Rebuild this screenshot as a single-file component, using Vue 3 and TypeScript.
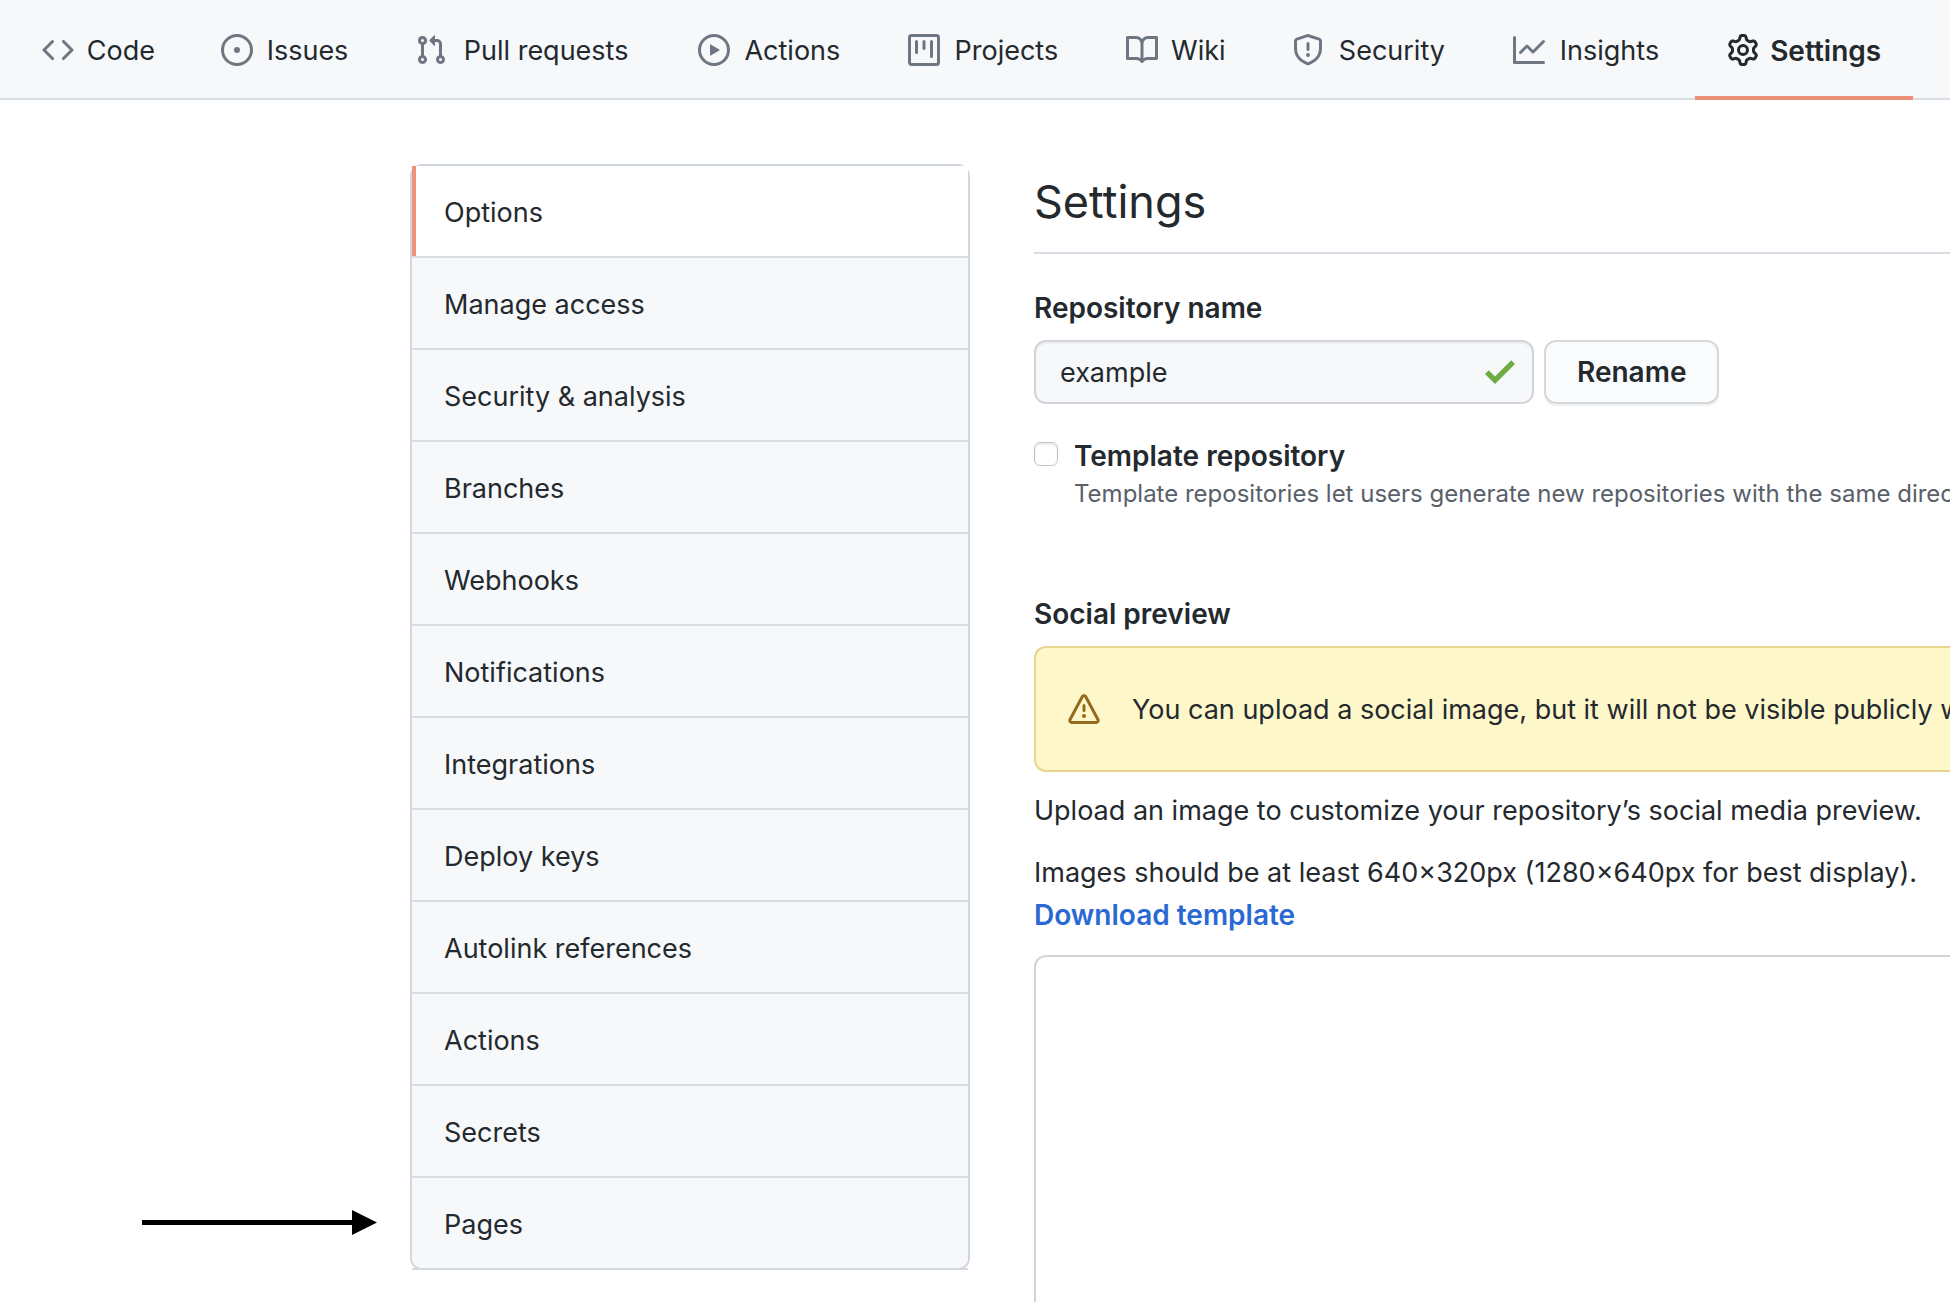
<script setup lang="ts">
import { ref } from 'vue'

interface Tab {
  label: string
  icon: string
  current?: boolean
}

const tabs: Tab[] = [
  {
    label: 'Code',
    icon: 'M4.72 3.22a.75.75 0 011.06 1.06L2.06 8l3.72 3.72a.75.75 0 11-1.06 1.06L.47 8.53a.75.75 0 010-1.06l4.25-4.25zm6.56 0a.75.75 0 10-1.06 1.06L13.94 8l-3.72 3.72a.75.75 0 101.06 1.06l4.25-4.25a.75.75 0 000-1.06l-4.25-4.25z',
  },
  {
    label: 'Issues',
    icon: 'M8 9.5a1.5 1.5 0 100-3 1.5 1.5 0 000 3zM8 0a8 8 0 100 16A8 8 0 008 0zM1.5 8a6.5 6.5 0 1113 0 6.5 6.5 0 01-13 0z',
  },
  {
    label: 'Pull requests',
    icon: 'M7.177 3.073L9.573.677A.25.25 0 0110 .854v4.792a.25.25 0 01-.427.177L7.177 3.427a.25.25 0 010-.354zM3.75 2.5a.75.75 0 100 1.5.75.75 0 000-1.5zm-2.25.75a2.25 2.25 0 113 2.122v5.256a2.251 2.251 0 11-1.5 0V5.372A2.25 2.25 0 011.5 3.25zM11 2.5h-1V4h1a1 1 0 011 1v5.628a2.251 2.251 0 101.5 0V5A2.5 2.5 0 0011 2.5zm1 10.25a.75.75 0 111.5 0 .75.75 0 01-1.5 0zM3.75 12a.75.75 0 100 1.5.75.75 0 000-1.5z',
  },
  {
    label: 'Actions',
    icon: 'M1.5 8a6.5 6.5 0 1113 0 6.5 6.5 0 01-13 0zM8 0a8 8 0 100 16A8 8 0 008 0zM6.379 5.227A.25.25 0 006 5.442v5.117a.25.25 0 00.379.214l4.264-2.559a.25.25 0 000-.428L6.379 5.227z',
  },
  {
    label: 'Projects',
    icon: 'M1.75 0A1.75 1.75 0 000 1.75v12.5C0 15.216.784 16 1.75 16h12.5A1.75 1.75 0 0016 14.25V1.75A1.75 1.75 0 0014.25 0H1.75zM1.5 1.75a.25.25 0 01.25-.25h12.5a.25.25 0 01.25.25v12.5a.25.25 0 01-.25.25H1.75a.25.25 0 01-.25-.25V1.75zM11.75 3a.75.75 0 00-.75.75v7.5a.75.75 0 001.5 0v-7.5a.75.75 0 00-.75-.75zm-8.25.75a.75.75 0 011.5 0v5.5a.75.75 0 01-1.5 0v-5.5zM8 3a.75.75 0 00-.75.75v3.5a.75.75 0 001.5 0v-3.5A.75.75 0 008 3z',
  },
  {
    label: 'Wiki',
    icon: 'M0 1.75A.75.75 0 01.75 1h4.253c1.227 0 2.317.59 3 1.501A3.744 3.744 0 0111.006 1h4.245a.75.75 0 01.75.75v10.5a.75.75 0 01-.75.75h-4.507a2.25 2.25 0 00-1.591.659l-.622.621a.75.75 0 01-1.06 0l-.622-.621A2.25 2.25 0 005.258 13H.75a.75.75 0 01-.75-.75V1.75zm8.755 3a2.25 2.25 0 012.25-2.25H14.5v9h-3.757c-.71 0-1.4.201-1.992.572l.004-7.322zm-1.504 7.324l.004-5.073-.002-2.253A2.25 2.25 0 005.003 2.5H1.5v9h3.757a3.75 3.75 0 011.994.574z',
  },
  {
    label: 'Security',
    icon: 'M7.467.133a1.75 1.75 0 011.066 0l5.25 1.68A1.75 1.75 0 0115 3.48V7c0 1.566-.32 3.182-1.303 4.682-.983 1.498-2.585 2.813-5.032 3.855a1.7 1.7 0 01-1.33 0c-2.447-1.042-4.049-2.357-5.032-3.855C1.32 10.182 1 8.566 1 7V3.48a1.75 1.75 0 011.217-1.667l5.25-1.68zm.61 1.429a.25.25 0 00-.153 0l-5.25 1.68a.25.25 0 00-.174.238V7c0 1.358.275 2.666 1.057 3.86.784 1.194 2.121 2.34 4.366 3.297a.2.2 0 00.154 0c2.245-.956 3.582-2.104 4.366-3.298C13.225 9.666 13.5 8.36 13.5 7V3.48a.25.25 0 00-.174-.237l-5.25-1.68zM9 10.5a1 1 0 11-2 0 1 1 0 012 0zm-.25-5.75a.75.75 0 10-1.5 0v3a.75.75 0 001.5 0v-3z',
  },
  {
    label: 'Insights',
    icon: 'M1.5 1.75a.75.75 0 00-1.5 0v12.5c0 .414.336.75.75.75h14.5a.75.75 0 000-1.5H1.5V1.75zm14.28 2.53a.75.75 0 00-1.06-1.06L10 7.94 7.53 5.47a.75.75 0 00-1.06 0L3.22 8.72a.75.75 0 001.06 1.06L7 7.06l2.47 2.47a.75.75 0 001.06 0l5.25-5.25z',
  },
  {
    label: 'Settings',
    current: true,
    icon: 'M7.429 1.525a6.593 6.593 0 011.142 0c.036.003.108.036.137.146l.289 1.105c.147.56.55.967.997 1.189.174.086.341.183.501.29.417.278.97.423 1.53.27l1.102-.303c.11-.03.175.016.195.046.219.31.41.641.573.989.014.031.022.11-.059.19l-.815.806c-.411.406-.562.957-.53 1.456a4.588 4.588 0 010 .582c-.032.499.119 1.05.53 1.456l.815.806c.08.08.073.159.059.19a6.494 6.494 0 01-.573.99c-.02.029-.086.074-.195.045l-1.103-.303c-.559-.153-1.112-.008-1.529.27-.16.107-.327.204-.5.29-.449.222-.851.628-.998 1.189l-.289 1.105c-.029.11-.101.143-.137.146a6.613 6.613 0 01-1.142 0c-.036-.003-.108-.037-.137-.146l-.289-1.105c-.147-.56-.55-.967-.997-1.189a4.502 4.502 0 01-.501-.29c-.417-.278-.97-.423-1.53-.27l-1.102.303c-.11.03-.175-.016-.195-.046a6.492 6.492 0 01-.573-.989c-.014-.031-.022-.11.059-.19l.815-.806c.411-.406.562-.957.53-1.456a4.587 4.587 0 010-.582c.032-.499-.119-1.05-.53-1.456l-.815-.806c-.08-.08-.073-.159-.059-.19a6.44 6.44 0 01.573-.99c.02-.029.086-.075.195-.045l1.103.303c.559.153 1.112.008 1.529-.27.16-.107.327-.204.5-.29.449-.222.851-.628.998-1.189l.289-1.105c.029-.11.101-.143.137-.146zM8 0c-.236 0-.47.01-.701.03-.743.065-1.29.615-1.458 1.261l-.29 1.106c-.017.066-.078.158-.211.224a5.994 5.994 0 00-.668.386c-.123.082-.233.09-.3.071L3.27 2.776c-.644-.177-1.392.02-1.82.63a7.977 7.977 0 00-.704 1.217c-.315.675-.111 1.422.363 1.891l.815.806c.05.048.098.147.088.294a6.084 6.084 0 000 .772c.01.147-.038.246-.088.294l-.815.806c-.474.469-.678 1.216-.363 1.891.2.428.436.835.704 1.218.428.609 1.176.806 1.82.63l1.103-.303c.066-.019.176-.011.299.071.213.143.436.272.668.386.133.066.194.158.212.224l.289 1.106c.169.646.715 1.196 1.458 1.26a8.094 8.094 0 001.402 0c.743-.064 1.29-.614 1.458-1.26l.29-1.106c.017-.066.078-.158.211-.224a5.98 5.98 0 00.668-.386c.123-.082.233-.09.3-.071l1.102.302c.644.177 1.392-.02 1.82-.63.268-.382.505-.789.704-1.217.315-.675.111-1.422-.364-1.891l-.814-.806c-.05-.048-.098-.147-.088-.294a6.1 6.1 0 000-.772c-.01-.147.039-.246.088-.294l.814-.806c.475-.469.679-1.216.364-1.891a7.992 7.992 0 00-.704-1.218c-.428-.609-1.176-.806-1.82-.63l-1.103.303c-.066.019-.176.011-.299-.071a5.991 5.991 0 00-.668-.386c-.133-.066-.194-.158-.212-.224L10.16 1.29C9.99.645 9.444.095 8.701.031A8.094 8.094 0 008 0zm1.5 8a1.5 1.5 0 11-3 0 1.5 1.5 0 013 0zM11 8a3 3 0 11-6 0 3 3 0 016 0z',
  },
]

const menu: string[] = [
  'Options',
  'Manage access',
  'Security & analysis',
  'Branches',
  'Webhooks',
  'Notifications',
  'Integrations',
  'Deploy keys',
  'Autolink references',
  'Actions',
  'Secrets',
  'Pages',
]

const currentMenu = 'Options'
const repositoryName = ref('example')
const isTemplate = ref(false)
</script>

<template>
  <div class="page">
    <nav class="tabs" aria-label="Repository">
      <a
        v-for="tab in tabs"
        :key="tab.label"
        href="#"
        class="tab"
        :class="{ 'tab-current': tab.current }"
        :aria-current="tab.current ? 'page' : undefined"
      >
        <svg class="tab-icon" viewBox="0 0 16 16" aria-hidden="true">
          <path fill-rule="evenodd" :d="tab.icon" />
        </svg>
        <span class="tab-label" :data-content="tab.label">{{ tab.label }}</span>
      </a>
    </nav>

    <div class="content">
      <div class="side">
        <svg class="arrow" viewBox="0 0 235 26" aria-hidden="true">
          <path d="M0 10h210V0l25 12.5L210 25V15H0z" />
        </svg>
        <nav class="menu" aria-label="Settings">
          <a
            v-for="item in menu"
            :key="item"
            href="#"
            class="menu-item"
            :class="{ 'menu-current': item === currentMenu }"
            >{{ item }}</a
          >
        </nav>
      </div>

      <main class="main">
        <h1 class="title">Settings</h1>

        <form class="rename" @submit.prevent>
          <label class="field-label" for="repo-name">Repository name</label>
          <div class="rename-row">
            <div class="name-field">
              <input id="repo-name" v-model="repositoryName" class="name-input" type="text" />
              <svg class="name-check" viewBox="0 3.5 12 9.5" aria-hidden="true">
                <path d="M12 5l-8 8-4-4 1.5-1.5L4 10l6.5-6.5L12 5z" />
              </svg>
            </div>
            <button class="button" type="submit">Rename</button>
          </div>
        </form>

        <div class="template">
          <input id="template" v-model="isTemplate" class="checkbox" type="checkbox" />
          <div class="template-text">
            <label class="field-label" for="template">Template repository</label>
            <p class="note">
              Template repositories let users generate new repositories with the same directory structure and files.
            </p>
          </div>
        </div>

        <section class="social">
          <h2 class="field-label">Social preview</h2>
          <div class="flash">
            <svg class="flash-icon" viewBox="0 0 16 16" aria-hidden="true">
              <path
                fill-rule="evenodd"
                d="M8.22 1.754a.25.25 0 00-.44 0L1.698 13.132a.25.25 0 00.22.368h12.164a.25.25 0 00.22-.368L8.22 1.754zm-1.763-.707c.659-1.234 2.427-1.234 3.086 0l6.082 11.378A1.75 1.75 0 0114.082 15H1.918a1.75 1.75 0 01-1.543-2.575L6.457 1.047zM9 11a1 1 0 11-2 0 1 1 0 012 0zm-.25-5.25a.75.75 0 00-1.5 0v2.5a.75.75 0 001.5 0v-2.5z"
              />
            </svg>
            <span>You can upload a social image, but it will not be visible publicly while this repository is private.</span>
          </div>
          <p class="text">Upload an image to customize your repository’s social media preview.</p>
          <p class="text">
            Images should be at least 640×320px (1280×640px for best display).<br />
            <a class="link" href="#">Download template</a>
          </p>
          <div class="preview"></div>
        </section>
      </main>
    </div>
  </div>
</template>

<style>
body {
  margin: 0;
  overflow: hidden;
}
</style>

<style scoped>
.page {
  height: 100vh;
  display: flex;
  flex-direction: column;
  overflow: hidden;
  background: #fff;
  color: #24292e;
  font-family: Inter, 'Liberation Sans', sans-serif;
  font-size: 27px;
  line-height: 42px;
  white-space: nowrap;
}

h1,
h2,
p {
  margin: 0;
}

a {
  color: inherit;
  text-decoration: none;
}

.tabs {
  flex: none;
  display: flex;
  height: 100px;
  padding-left: 10px;
  background: #f6f8fa;
  box-shadow: inset 0 -2px #d8dee4;
}

.tab {
  display: flex;
  align-items: center;
  gap: 11px;
  padding: 0 32px;
}

.tab-icon {
  flex: none;
  width: 32px;
  height: 32px;
  fill: #6e7781;
}

.tab-label {
  padding-top: 2px;
  text-align: center;
}

/* Reserves the width of the bold label, so tabs keep their size when selected */
.tab-label::after {
  content: attr(data-content);
  display: block;
  height: 0;
  overflow: hidden;
  visibility: hidden;
  font-size: 28px;
  font-weight: 600;
}

.tab-current {
  font-size: 28px;
  font-weight: 600;
  box-shadow: inset 0 -4px #ec8e78;
}

.tab-current .tab-icon {
  fill: #24292e;
}

.content {
  flex: 1;
  min-height: 0;
  display: flex;
  align-items: stretch;
  gap: 64px;
  padding-top: 64px;
}

.side {
  flex: none;
  align-self: flex-start;
  display: flex;
  align-items: flex-end;
  gap: 33px;
  padding-left: 142px;
}

.arrow {
  width: 235px;
  height: 26px;
  margin-bottom: 34px;
}

.menu {
  position: relative;
  box-sizing: border-box;
  width: 560px;
  border: 2px solid #d0d7de;
  border-radius: 12px;
}

/* Square-ended rule along the lower edge of the menu */
.menu::after {
  content: '';
  position: absolute;
  left: 0;
  right: 0;
  bottom: -2px;
  height: 2px;
  background: #d3d9df;
}

.menu-item {
  display: block;
  padding: 26px 32px 22px;
  background: #f6f8fa;
  border-bottom: 2px solid #d8dee4;
}

.menu-item:last-child {
  border-bottom: 0;
  border-radius: 0 0 10px 10px;
}

.menu-current {
  background: #fff;
  box-shadow: inset 4px 0 #f0917b;
}

.main {
  flex: 1;
  min-width: 0;
  display: flex;
  flex-direction: column;
}

.title {
  padding: 3px 0 15px;
  border-bottom: 2px solid #d8dee4;
  font-size: 45px;
  font-weight: 400;
  line-height: 70px;
}

.field-label {
  display: block;
  font-size: 28px;
  font-weight: 600;
  line-height: 42px;
}

.rename {
  display: flex;
  flex-direction: column;
  gap: 11px;
  padding-top: 33px;
}

.rename-row {
  display: flex;
  gap: 10px;
}

.name-field {
  position: relative;
  width: 500px;
}

.name-input {
  box-sizing: border-box;
  width: 100%;
  height: 64px;
  padding: 0 64px 0 24px;
  border: 2px solid #d1d5da;
  border-radius: 12px;
  background: #f6f8fa;
  box-shadow: inset 0 2px #edeff2;
  color: inherit;
  font: inherit;
}

.name-check {
  position: absolute;
  top: 20px;
  right: 19px;
  width: 30px;
  height: 24px;
  fill: #6cac43;
}

.button {
  box-sizing: border-box;
  height: 64px;
  padding: 0 31px;
  border: 2px solid #d5d8da;
  border-radius: 12px;
  background: #fafbfc;
  box-shadow: 0 2px #f0f1f2;
  color: inherit;
  font: inherit;
  font-size: 28px;
  font-weight: 600;
}

.template {
  display: flex;
  align-items: flex-start;
  gap: 16px;
  padding-top: 31px;
}

.checkbox {
  flex: none;
  appearance: none;
  box-sizing: border-box;
  width: 24px;
  height: 24px;
  margin: 7px 0 0;
  border: 1px solid #c4c4c4;
  border-radius: 6px;
  background: #fff;
  box-shadow: inset 0 2px 2px #ededed;
}

.template-text {
  min-width: 0;
}

.note {
  color: #586069;
  font-size: 24px;
  line-height: 34px;
}

.social {
  flex: 1;
  min-height: 0;
  display: flex;
  flex-direction: column;
  padding-top: 82px;
}

.flash {
  display: flex;
  align-items: center;
  gap: 32px;
  margin: 11px 0 18px;
  padding: 41px 32px 39px;
  border: 2px solid #e8d68c;
  border-right: 0;
  border-radius: 12px 0 0 12px;
  background: #fef7c9;
}

.flash-icon {
  flex: none;
  width: 32px;
  height: 32px;
  fill: #946a1f;
}

.text + .text {
  margin-top: 20px;
}

.link {
  color: #2a69d4;
  font-size: 28px;
  font-weight: 600;
}

.preview {
  flex: 1;
  margin-top: 18px;
  border: 2px solid #d1d5da;
  border-width: 2px 0 0 2px;
  border-radius: 12px 0 0;
}
</style>
